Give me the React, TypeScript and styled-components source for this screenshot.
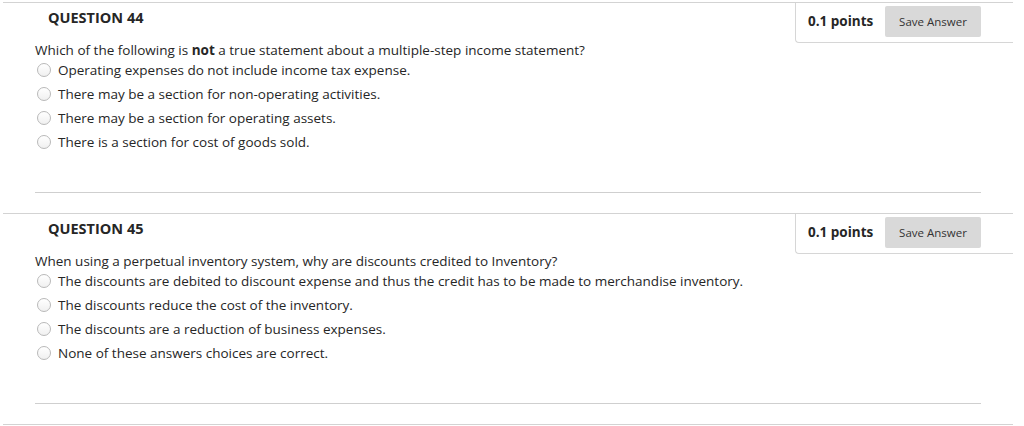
import React from "react";
import styled, { createGlobalStyle } from "styled-components";

const Global = createGlobalStyle`
  html, body { margin: 0; padding: 0; background: #fff; }
  body { font-family: "Open Sans", "Liberation Sans", sans-serif; color: #262626; }
`;

const Page = styled.div`
  padding-top: 2px;
  width: 1013px;
`;

const Block = styled.section`
  margin-left: 3px;
  border-top: 1px solid #d3d3d3;
  padding-bottom: 20px;
`;

const Top = styled.div`
  display: grid;
  grid-template-columns: 1fr 218px;
  grid-template-rows: 38px auto;
`;

const Heading = styled.h3`
  grid-column: 1;
  grid-row: 1;
  margin: 0;
  padding: 5px 0 0 45px;
  font-size: 14.5px;
  line-height: 20px;
  font-weight: 700;
  color: #262626;
`;

const PointsBox = styled.div`
  grid-column: 2;
  grid-row: 1 / span 2;
  align-self: start;
  box-sizing: border-box;
  height: 40px;
  display: flex;
  align-items: flex-start;
  padding-left: 12px;
  border-left: 1px solid #d6d6d6;
  border-bottom: 1px solid #d6d6d6;
  border-bottom-left-radius: 4px;
`;

const Points = styled.span`
  font-size: 13.5px;
  font-weight: 700;
  line-height: 20px;
  margin-top: 8px;
`;

const SaveButton = styled.button`
  margin: 3px 32px 0 auto;
  width: 96px;
  height: 31px;
  border: none;
  border-radius: 2px;
  background: #d9d9d9;
  color: #333;
  font-family: "Open Sans", "Liberation Sans", sans-serif;
  font-size: 11.5px;
  padding: 0;
`;

const Body = styled.div`
  grid-column: 1;
  grid-row: 2;
  padding-left: 32px;
`;

const Prompt = styled.p`
  margin: 0;
  padding-top: 1px;
  font-size: 13.5px;
  line-height: 16px;
`;

const Options = styled.ul`
  list-style: none;
  margin: 0;
  padding: 0;
`;

const Option = styled.li`
  display: flex;
  align-items: center;
  height: 24px;
  font-size: 13.5px;
`;

const Radio = styled.span`
  box-sizing: border-box;
  width: 14px;
  height: 14px;
  margin: 0 7px 0 2px;
  border-radius: 50%;
  border: 1px solid #b9b9b9;
  background: linear-gradient(#ffffff, #f0f0f0);
  flex-shrink: 0;
`;

const Divider = styled.hr`
  margin: 38px 0 0 32px;
  width: 946px;
  border: none;
  border-top: 1px solid #cfcfcf;
  height: 0;
`;

type Q = { num: number; prompt: React.ReactNode; options: string[] };

const questions: Q[] = [
  {
    num: 44,
    prompt: (
      <>
        Which of the following is <b>not</b> a true statement about a multiple-step income statement?
      </>
    ),
    options: [
      "Operating expenses do not include income tax expense.",
      "There may be a section for non-operating activities.",
      "There may be a section for operating assets.",
      "There is a section for cost of goods sold.",
    ],
  },
  {
    num: 45,
    prompt: "When using a perpetual inventory system, why are discounts credited to Inventory?",
    options: [
      "The discounts are debited to discount expense and thus the credit has to be made to merchandise inventory.",
      "The discounts reduce the cost of the inventory.",
      "The discounts are a reduction of business expenses.",
      "None of these answers choices are correct.",
    ],
  },
];

const EndLine = styled.div`
  margin-left: 3px;
  border-top: 1px solid #d3d3d3;
`;

export default function App() {
  return (
    <Page>
      <Global />
      {questions.map((q) => (
        <Block key={q.num}>
          <Top>
            <Heading>QUESTION {q.num}</Heading>
            <PointsBox>
              <Points>0.1 points</Points>
              <SaveButton>Save Answer</SaveButton>
            </PointsBox>
            <Body>
              <Prompt>{q.prompt}</Prompt>
              <Options>
                {q.options.map((o) => (
                  <Option key={o}>
                    <Radio />
                    {o}
                  </Option>
                ))}
              </Options>
            </Body>
          </Top>
          <Divider />
        </Block>
      ))}
      <EndLine />
    </Page>
  );
}
